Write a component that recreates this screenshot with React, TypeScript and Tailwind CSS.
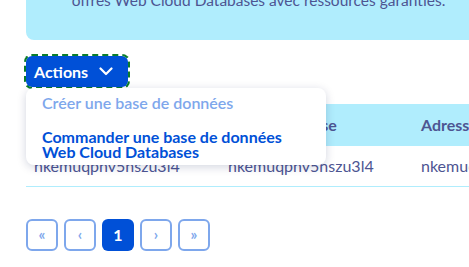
import React from "react";

const font = { fontFamily: "Lato, 'Open Sans', sans-serif" };

function Chevron() {
  return (
    <svg width="14" height="9" viewBox="0 0 14 9" fill="none">
      <path d="M1.5 1.5 L7 7 L12.5 1.5" stroke="white" strokeWidth="2.2" strokeLinecap="round" strokeLinejoin="round" />
    </svg>
  );
}

const pages = [
  { label: "«", active: false },
  { label: "‹", active: false },
  { label: "1", active: true },
  { label: "›", active: false },
  { label: "»", active: false },
];

export default function App() {
  return (
    <div className="relative w-[469px] h-[267px] overflow-hidden bg-white text-[#4d5592]" style={font}>
      <div className="pl-[26px]">
        {/* info banner */}
        <div className="w-[465px] h-[40px] rounded-bl-lg bg-[#b0edfd] text-center text-[15.5px] leading-[20px]">
          <p className="-translate-y-[10px]">offres Web Cloud Databases avec ressources garanties.</p>
        </div>

        {/* actions button */}
        <div className="mt-[16px]">
          <button className="flex h-[31px] w-[102px] items-center rounded-md bg-[#0050d7] pl-[8px] text-[16px] font-bold text-white outline-2 outline-dashed outline-[#0a7d2a]">
            Actions
            <span className="ml-[11px]">
              <Chevron />
            </span>
          </button>
        </div>

        {/* table */}
        <table className="mt-[17px] w-[600px] table-fixed border-collapse text-left text-[16px]">
          <colgroup>
            <col className="w-[194px]" />
            <col className="w-[193px]" />
            <col />
          </colgroup>
          <thead>
            <tr className="h-[42px] bg-[#b0edfd]">
              <th className="pl-[8px] font-bold whitespace-nowrap">Nom d'affichage</th>
              <th className="pl-[8px] font-bold whitespace-nowrap">Nom de la base</th>
              <th className="pl-[8px] font-bold whitespace-nowrap">Adresse du serveur</th>
            </tr>
          </thead>
          <tbody>
            <tr className="h-[40px] border-b border-[#b0edfd]">
              <td className="pl-[8px]">nkemuqphv5hszu3l4</td>
              <td className="pl-[8px]">nkemuqphv5hszu3l4</td>
              <td className="pl-[8px] whitespace-nowrap">nkemuqphv5hszu3l4.mysql.db</td>
            </tr>
          </tbody>
        </table>

        {/* pagination */}
        <div className="mt-[32px] flex gap-[6px]">
          {pages.map((p) =>
            p.active ? (
              <div
                key={p.label}
                className="flex h-[32px] w-[32px] items-center justify-center rounded-md bg-[#0050d7] text-[16px] font-bold text-white"
              >
                {p.label}
              </div>
            ) : (
              <div
                key={p.label}
                className="flex h-[32px] w-[32px] items-center justify-center rounded-md border-2 border-[#7ea7ec] text-[15px] font-bold text-[#7ea7ec]"
              >
                {p.label}
              </div>
            )
          )}
        </div>
      </div>

      {/* dropdown menu */}
      <div className="absolute left-[26px] top-[88px] w-[300px] rounded-lg bg-white pt-[7px] pb-[6px] shadow-[0_2px_10px_rgba(0,20,80,0.18)]">
        <div className="px-[16px] text-[16px] leading-[16px] font-semibold text-[#7ea7ec]">Créer une base de données</div>
        <div className="mt-[18px] px-[16px] text-[16px] leading-[15px] font-bold text-[#0050d7]">
          Commander une base de données
          <br />
          Web Cloud Databases
        </div>
      </div>
    </div>
  );
}
